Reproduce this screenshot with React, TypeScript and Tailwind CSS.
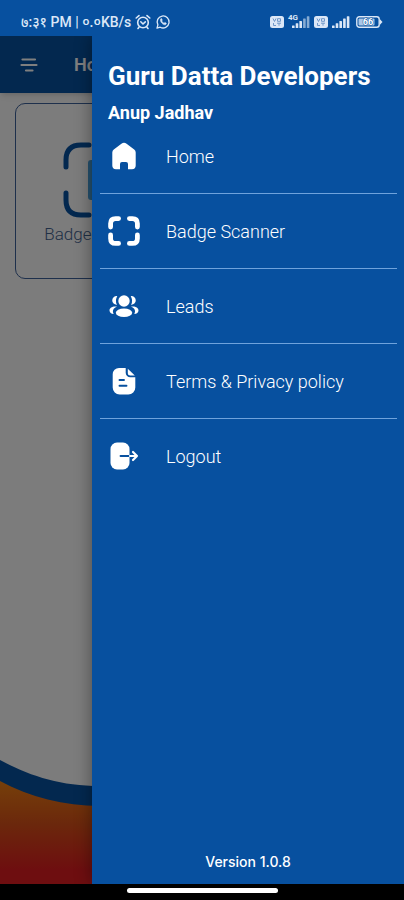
import { useState, type ReactNode } from 'react';

const HomeIcon = () => (
  <svg className="h-7 w-8" viewBox="0 0 32 28" fill="currentColor">
    <path d="M13.400 1.800a4 4 0 0 1 5.200 0l7.600 5.700a4 4 0 0 1 1.500 3.100V23.500a3.700 3.700 0 0 1-3.700 3.700H20V22a2 2 0 0 0-2-2h-4a2 2 0 0 0-2 2v5.200H8a3.700 3.700 0 0 1-3.700-3.700V10.600a4 4 0 0 1 1.500-3.100z" />
  </svg>
);

const ScanIcon = () => (
  <svg className="h-[30px] w-8" viewBox="0 0 32 30" fill="none" stroke="currentColor" strokeWidth="4.800" strokeLinecap="round">
    <path d="M2.600 11V7.600Q2.600 2.600 7.600 2.600H10.600M21.400 2.600H24.400Q29.400 2.600 29.400 7.600V11M29.400 19V22.400Q29.400 27.400 24.400 27.400H21.400M10.600 27.400H7.600Q2.600 27.400 2.600 22.400V19" />
  </svg>
);

const LeadsIcon = () => (
  <svg className="h-7 w-8" viewBox="0 0 32 28" fill="currentColor">
    <path d="M9.300 4.200a8.200 8.200 0 0 0-.3 8.500 4.300 4.300 0 1 1 .3-8.500zM22.700 4.200a8.200 8.200 0 0 1 .3 8.500 4.300 4.300 0 1 0-.3-8.500z" />
    <circle cx="16" cy="9" r="5.700" />
    <ellipse cx="16" cy="20.800" rx="8.200" ry="4.300" />
    <path d="M9 14.800c-3.800 1.200-5 4.200-3.300 7.200-2.500-.2-4.200-1.500-4.200-3.500 0-2.700 3.500-4.500 7.500-3.700zM23 14.800c3.800 1.200 5 4.200 3.300 7.200 2.500-.2 4.200-1.500 4.200-3.500 0-2.700-3.500-4.500-7.500-3.700z" />
  </svg>
);

const DocumentIcon = () => (
  <svg className="h-7 w-8" viewBox="0 0 32 28">
    <path fill="currentColor" d="M11 1h6.700v4.700A4.600 4.600 0 0 0 22.300 10.300H27.300v10.200a7 7 0 0 1-7 7H11.700a7 7 0 0 1-7-7v-13.200a6.300 6.300 0 0 1 6.300-6.300zM19.800 1.700 26.800 8.500h-4.500a2.500 2.500 0 0 1-2.500-2.500z" />
    <path stroke="#07509f" strokeWidth="1.900" strokeLinecap="round" d="M11.500 13h4.500M11.500 18.800h7" />
  </svg>
);

const LogoutIcon = () => (
  <svg className="h-7 w-8" viewBox="0 0 32 28">
    <rect x="2.500" y=".5" width="19" height="27" rx="6.500" fill="currentColor" />
    <path stroke="#07509f" strokeWidth="1.800" strokeLinecap="round" d="M12.500 14h9" />
    <path fill="none" stroke="currentColor" strokeWidth="2.200" strokeLinecap="round" strokeLinejoin="round" d="M22 14h7M25 10l4 4-4 4" />
  </svg>
);

const MenuIcon = () => (
  <svg className="h-4 w-[18px]" viewBox="0 0 18 16" stroke="currentColor" strokeWidth="2.200" strokeLinecap="round">
    <path d="M2.500 2.500h12.500M1.500 8h15M6 13.500h6.500" />
  </svg>
);

const BadgeIcon = () => (
  <svg className="h-[76px] w-[76px]" viewBox="0 0 76 76" fill="none">
    <rect x="25" y="18" width="26" height="40" rx="3" fill="#4aa3dc" />
    <path stroke="#07509f" strokeWidth="5" strokeLinecap="round" d="M3 25V18Q3 3 18 3H26M50 3H58Q73 3 73 18V25M73 51V58Q73 73 58 73H50M26 73H18Q3 73 3 58V51" />
  </svg>
);

const AlarmIcon = () => (
  <svg className="h-4 w-4" viewBox="0 0 16 16" fill="none" stroke="currentColor" strokeWidth="1.600" strokeLinecap="round" strokeLinejoin="round">
    <circle cx="8" cy="8.500" r="5.300" />
    <path d="M5.800 7.800 8 10l2.300-2.200M1.200 4 4 1.600M14.800 4 12 1.600M4 13.200l-1 1.300M12 13.200l1 1.300" />
  </svg>
);

const WhatsAppIcon = () => (
  <svg className="h-4 w-4" viewBox="0 0 16 16" fill="none" stroke="currentColor" strokeWidth="1.300" strokeLinejoin="round">
    <path d="M2 14.200l.9-3.300a6 6 0 1 1 2.300 2.300z" />
    <path fill="currentColor" strokeWidth=".5" d="M5.600 5c.5-.7 1-.5 1.200 0l.5 1.100-.6.900c.5 1 1.200 1.700 2.300 2.200l.8-.8 1.400.7c.3.200 0 1.300-.8 1.600C8.200 11.300 4.600 7.700 5.600 5z" />
  </svg>
);

const VoLteIcon = () => (
  <svg className="h-3 w-[14px]" viewBox="0 0 14 12">
    <rect width="14" height="12" rx="2.500" fill="#dbe7f7" />
    <path fill="none" stroke="#6f97c9" strokeWidth="1" d="M3 2.500l1.500 3L6 2.500M7.500 2.700h3v2.600h-3zM3.500 7v2.500h2.500M7 7.200h4M9 7.200v2.500" />
  </svg>
);

const SignalIcon = ({ level }: { level: number }) => (
  <svg className="h-3 w-[18px]" viewBox="0 0 18 12" fill="currentColor">
    {[0, 1, 2, 3, 4].map((i) => (
      <rect key={i} x={i * 3.7} y={9.5 - i * 2.3} width="2.600" height={2.5 + i * 2.3} rx=".5" opacity={i < level ? 1 : 0.6} />
    ))}
  </svg>
);

const BatteryIcon = () => (
  <svg className="h-3 w-[27px]" viewBox="0 0 27 12">
    <rect x=".8" y=".8" width="22.400" height="10.400" rx="2.500" fill="none" stroke="currentColor" strokeWidth="1.400" />
    <rect x="2.500" y="2.500" width="16" height="7" rx="1" fill="#a9c7e8" />
    <path d="M24 3.200 26.500 6 24 8.800z" fill="currentColor" />
    <text x="12" y="9.200" textAnchor="middle" fontSize="9" fontWeight="700" fill="#fff" stroke="#07509f" strokeWidth="1" paintOrder="stroke">66</text>
  </svg>
);

const menuItems: { label: string; icon: ReactNode }[] = [
  { label: 'Home', icon: <HomeIcon /> },
  { label: 'Badge Scanner', icon: <ScanIcon /> },
  { label: 'Leads', icon: <LeadsIcon /> },
  { label: 'Terms & Privacy policy', icon: <DocumentIcon /> },
  { label: 'Logout', icon: <LogoutIcon /> },
];

export default function App() {
  const [open, setOpen] = useState(true);

  return (
    <div className="flex min-h-screen flex-col bg-[#07509f] font-['Roboto','Noto_Sans',sans-serif]">
      {/* Status bar */}
      <div className="flex h-9 items-end justify-between px-[21px] pb-1 text-[#dbe7f7]">
        <div className="flex h-5 items-center gap-1 text-[14px] font-medium leading-5">
          <span>७:३१ PM | ०.०KB/s</span>
          <AlarmIcon />
          <WhatsAppIcon />
        </div>
        <div className="flex h-5 items-center gap-1">
          <VoLteIcon />
          <div className="relative pl-1">
            <span className="absolute -top-[2px] left-0 text-[8px] font-bold leading-none">4G</span>
            <SignalIcon level={3} />
          </div>
          <VoLteIcon />
          <SignalIcon level={5} />
          <div className="pl-[2px]">
            <BatteryIcon />
          </div>
        </div>
      </div>

      <div className="relative flex flex-1 flex-col overflow-hidden bg-[#f8f8f8]">
        {/* App bar */}
        <header className="flex h-[57px] items-center gap-9 bg-[#07509f] pl-5 text-white shadow-md">
          <button type="button" aria-label="Open menu" onClick={() => setOpen(true)}>
            <MenuIcon />
          </button>
          <h1 className="text-[18px] font-semibold">Home</h1>
        </header>

        <main className="grid grid-cols-2 gap-8 px-[15px] pt-[10px]">
          <button
            type="button"
            className="flex h-[176px] flex-col items-center rounded-[10px] border border-[#3d6098] pt-[38px] text-[#41608c]"
          >
            <BadgeIcon />
            <span className="text-[17px] font-light leading-8">Badge Scanner</span>
          </button>
        </main>

        <svg className="mt-auto h-[134px] w-full" viewBox="0 0 404 134" preserveAspectRatio="none">
          <defs>
            <linearGradient id="sunset" x1="0" y1="0" x2="0" y2="1">
              <stop offset="0" stopColor="#f59a10" />
              <stop offset="0.200" stopColor="#ee8414" />
              <stop offset="0.550" stopColor="#d75018" />
              <stop offset="0.900" stopColor="#dc1c20" />
              <stop offset="1" stopColor="#dc1c20" />
            </linearGradient>
          </defs>
          <path fill="url(#sunset)" d="M0 20C34 42 66 50 100 50C210 50 290 10 404 0V134H0z" />
          <path fill="#07509f" d="M0 10C30 26 60 36 100 36C210 36 290 0 404 0V30C290 30 210 56 100 56C64 56 30 47 0 31z" />
        </svg>

        {open && (
          <>
            <button
              type="button"
              aria-label="Close menu"
              className="absolute inset-0 bg-black/50"
              onClick={() => setOpen(false)}
            />
            {/* Drawer */}
            <aside className="absolute inset-y-0 left-[92px] right-0 flex flex-col bg-[#07509f] text-white shadow-[0_0_16px_rgba(0,0,0,0.4)]">
              <div className="px-4 pt-6">
                <h2 className="text-[26px] font-bold leading-8">Guru Datta Developers</h2>
                <p className="pt-[10px] text-[18px] font-bold leading-[22px]">Anup Jadhav</p>
              </div>
              <nav className="pl-2 pr-[7px]">
                <ul className="divide-y divide-[#6fa3dc]">
                  {menuItems.map((item) => (
                    <li key={item.label} className="py-[22px] first:pt-[17px]">
                      <a href="#" className="flex h-[30px] items-center gap-[26px] pl-2 text-[18px] font-light">
                        {item.icon}
                        {item.label}
                      </a>
                    </li>
                  ))}
                </ul>
              </nav>
              <p className="mt-auto pb-3 text-center font-['Inter',sans-serif] text-[14px] font-medium leading-5">
                Version 1.0.8
              </p>
            </aside>
          </>
        )}
      </div>

      {/* Gesture bar */}
      <div className="flex h-4 justify-center bg-black pt-1">
        <div className="h-[5px] w-[151px] rounded-full bg-white" />
      </div>
    </div>
  );
}
